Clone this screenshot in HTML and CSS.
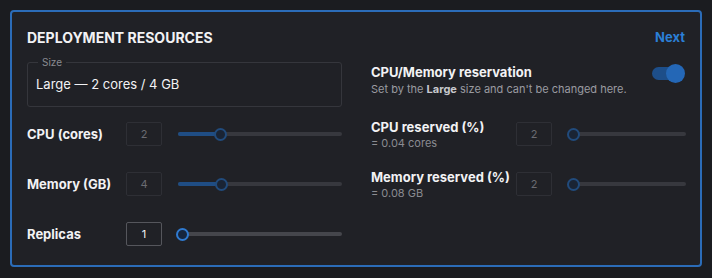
FILE: index.html
```html
<!DOCTYPE html>
<html lang="en">
<head>
  <meta charset="UTF-8">
  <title>Deployment Resources</title>
  <link rel="stylesheet" href="styles.css">
</head>
<body>
  <div class="panel">
    <div class="panel-head">
      <h2>DEPLOYMENT RESOURCES</h2>
      <a class="next" href="#">Next</a>
    </div>

    <div class="columns">
      <div class="col">
        <fieldset class="size">
          <legend>Size</legend>
          <div class="size-value">Large — 2 cores / 4 GB</div>
        </fieldset>

        <div class="row">
          <div class="label">CPU (cores)</div>
          <div class="num disabled">2</div>
          <div class="slider disabled">
            <div class="fill" style="width: 26%"></div>
            <div class="thumb" style="left: 26%"></div>
          </div>
        </div>

        <div class="row">
          <div class="label">Memory (GB)</div>
          <div class="num disabled">4</div>
          <div class="slider disabled">
            <div class="fill" style="width: 26.5%"></div>
            <div class="thumb" style="left: 26.5%"></div>
          </div>
        </div>

        <div class="row">
          <div class="label">Replicas</div>
          <div class="num">1</div>
          <div class="slider">
            <div class="thumb" style="left: 3%"></div>
          </div>
        </div>
      </div>

      <div class="col right">
        <div class="reservation">
          <div>
            <div class="label">CPU/Memory reservation</div>
            <div class="hint">Set by the <b>Large</b> size and can't be changed here.</div>
          </div>
          <div class="toggle"><span class="knob"></span></div>
        </div>

        <div class="row">
          <div class="label-block">
            <div class="label">CPU reserved (%)</div>
            <div class="sub">= 0.04 cores</div>
          </div>
          <div class="num disabled">2</div>
          <div class="slider disabled">
            <div class="thumb" style="left: 5%"></div>
          </div>
        </div>

        <div class="row">
          <div class="label-block">
            <div class="label">Memory reserved (%)</div>
            <div class="sub">= 0.08 GB</div>
          </div>
          <div class="num disabled">2</div>
          <div class="slider disabled">
            <div class="thumb" style="left: 5%"></div>
          </div>
        </div>
      </div>
    </div>
  </div>
</body>
</html>
```

FILE: styles.css
```css
body {
  margin: 0;
  padding: 10px;
  background-color: #1b1c20;
  font-family: Inter, "Noto Sans", sans-serif;
  color: #f2f2f4;
}

.panel {
  box-sizing: border-box;
  height: 257px;
  border: 2px solid #2b6cb8;
  border-radius: 4px;
  background: #202126;
  padding: 16px 15px 0 15px;
}

.panel-head {
  display: flex;
  justify-content: space-between;
  align-items: center;
  height: 18px;
  margin-bottom: 10px;
}

.panel-head h2 {
  margin: 0;
  font-size: 14px;
  font-weight: 700;
}

.next {
  color: #2b7fd6;
  font-size: 13px;
  font-weight: 700;
  text-decoration: none;
}

.columns {
  display: grid;
  grid-template-columns: 315px 315px;
  column-gap: 29px;
}

.size {
  margin: 0;
  padding: 0 8px;
  height: 51px;
  box-sizing: border-box;
  border: 1px solid #35363c;
  border-radius: 3px;
}

.size legend {
  font-size: 10px;
  color: #8a8b91;
  padding: 0 4px;
  margin-left: 2px;
  line-height: 12px;
}

.size-value {
  font-size: 13px;
  line-height: 18px;
  margin-top: 7px;
}

.row {
  display: flex;
  align-items: center;
  height: 26px;
  margin-top: 24px;
}

.size + .row,
.reservation + .row {
  margin-top: 14px;
}

.label {
  font-size: 13px;
  font-weight: 700;
  line-height: 16px;
}

.row > .label {
  width: 99px;
}

.label-block {
  width: 145px;
}

.sub {
  font-size: 11px;
  color: #8a8b91;
  line-height: 14px;
  margin-top: 1px;
}

.num {
  width: 36px;
  height: 24px;
  box-sizing: border-box;
  border: 1px solid #55565c;
  border-radius: 2px;
  font-size: 11px;
  display: flex;
  align-items: center;
  justify-content: center;
  color: #f2f2f4;
  flex-shrink: 0;
}

.num.disabled {
  border-color: #2e2f35;
  color: #6b6c72;
}

.slider {
  position: relative;
  flex: 1;
  height: 4px;
  margin-left: 16px;
  background: #45464c;
  border-radius: 2px;
}

.slider.disabled {
  background: #37383e;
}

.fill {
  height: 4px;
  border-radius: 2px;
  background: #1f4d84;
}

.thumb {
  position: absolute;
  top: 50%;
  width: 13px;
  height: 13px;
  box-sizing: border-box;
  margin: -6.5px 0 0 -6.5px;
  border-radius: 50%;
  border: 2px solid #2f7ad0;
  background: #16263e;
}

.slider.disabled .thumb {
  border-color: #214b7c;
  background: #1a2434;
}

.reservation {
  display: flex;
  justify-content: space-between;
  align-items: flex-start;
  height: 51px;
  padding-top: 8px;
  box-sizing: border-box;
}

.hint {
  font-size: 11px;
  color: #9a9ba1;
  line-height: 14px;
  margin-top: 2px;
}

.hint b {
  color: #c8c9ce;
}

.toggle {
  position: relative;
  width: 32px;
  height: 13px;
  margin-top: 3px;
  margin-right: 2px;
  border-radius: 7px;
  background: #1d4e89;
}

.toggle .knob {
  position: absolute;
  right: -1px;
  top: -3px;
  width: 19px;
  height: 19px;
  border-radius: 50%;
  background: #2467b6;
}
```
